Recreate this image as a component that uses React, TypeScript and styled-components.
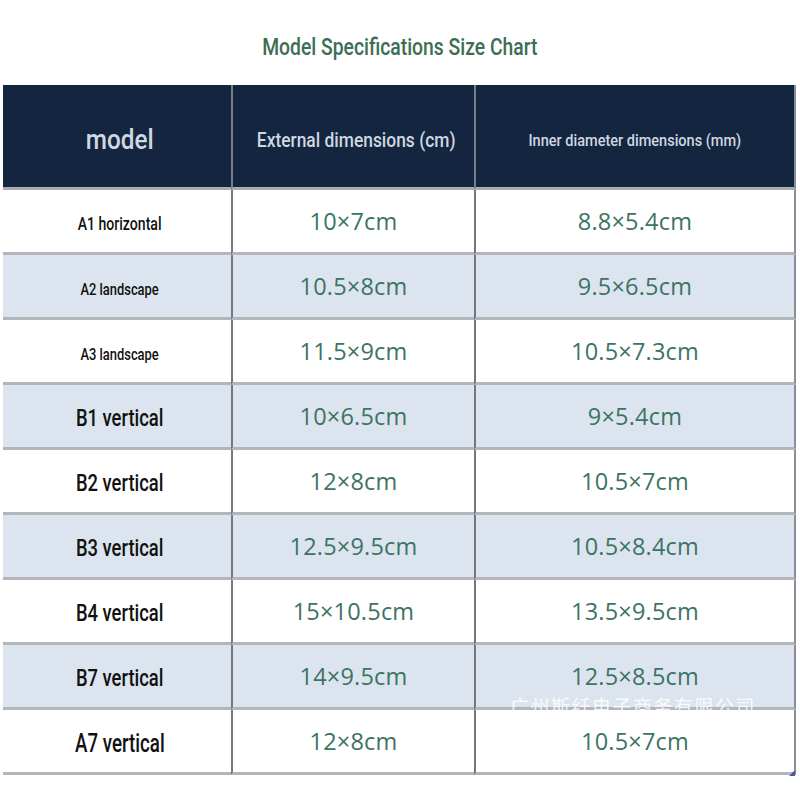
import React from "react";
import styled, { createGlobalStyle } from "styled-components";

const Global = createGlobalStyle`
  html, body { margin: 0; padding: 0; background: #ffffff; }
  body { width: 800px; height: 800px; overflow: hidden; }
`;

const COND = `"Roboto", "Liberation Sans", sans-serif`;

const Page = styled.div`
  position: relative;
  width: 800px;
  height: 800px;
  background: #ffffff;
`;

const Title = styled.h1`
  margin: 0;
  height: 76px;
  padding-top: 9px;
  display: flex;
  align-items: center;
  justify-content: center;
  font-family: ${COND};
  font-weight: 500;
  font-size: 23px;
  color: #3c6e55;
`;

/* condensed text: the reference uses a narrow face, which we approximate */
const Narrow = styled.span<{ $sx: number }>`
  display: inline-block;
  white-space: nowrap;
  transform: scaleX(${(p) => p.$sx});
  transform-origin: center;
`;

const Table = styled.div`
  margin-left: 3px;
  width: 793px;
  display: grid;
  grid-template-columns: 228px 243px 1fr;
`;

const HeadCell = styled.div<{ $size: number; $first?: boolean; $last?: boolean }>`
  height: 94px;
  padding-top: 8px;
  padding-left: ${(p) => (p.$first ? 6 : p.$last ? 0 : 6)}px;
  background: #13253f;
  border-bottom: 3px solid #a9adb2;
  border-left: ${(p) => (p.$first ? "none" : "2px solid #7a7e84")};
  border-right: ${(p) => (p.$last ? "2px solid #8a8e94" : "none")};
  display: flex;
  align-items: center;
  justify-content: center;
  font-family: ${COND};
  font-weight: 500;
  font-size: ${(p) => p.$size}px;
  color: #cfd7e0;
`;

const Cell = styled.div<{ $alt: boolean; $first?: boolean; $last?: boolean }>`
  height: 62px;
  padding-left: ${(p) => (p.$first ? 6 : 0)}px;
  background: ${(p) => (p.$alt ? "#dce5ef" : "#ffffff")};
  border-bottom: 3px solid #b2b5ba;
  border-left: ${(p) => (p.$first ? "none" : "2px solid #74777c")};
  border-right: ${(p) => (p.$last ? "2px solid #8a8e94" : "none")};
  display: flex;
  align-items: center;
  justify-content: center;
`;

const Label = styled.span<{ $size: number }>`
  font-family: ${COND};
  font-weight: 500;
  font-size: ${(p) => p.$size}px;
  color: #111111;
  padding-top: 5px;
`;

const Value = styled.span`
  font-family: "Open Sans", "Liberation Sans", sans-serif;
  font-size: 23.5px;
  color: #3d7363;
  letter-spacing: 0.2px;
`;

const Watermark = styled.div`
  position: absolute;
  left: 510px;
  top: 692px;
  font-family: "Noto Sans CJK SC", sans-serif;
  font-size: 19px;
  letter-spacing: 1.5px;
  color: rgba(255, 255, 255, 0.85);
`;

const Corner = styled.div`
  position: absolute;
  left: 789px;
  top: 770px;
  width: 0;
  height: 0;
  border-left: 6px solid transparent;
  border-bottom: 6px solid #4a5aa8;
`;

const rows: { label: string; size: number; sx: number; ext: string; inner: string }[] = [
  { label: "A1 horizontal", size: 19, sx: 0.74, ext: "10×7cm", inner: "8.8×5.4cm" },
  { label: "A2 landscape", size: 17, sx: 0.76, ext: "10.5×8cm", inner: "9.5×6.5cm" },
  { label: "A3 landscape", size: 17, sx: 0.76, ext: "11.5×9cm", inner: "10.5×7.3cm" },
  { label: "B1 vertical", size: 23, sx: 0.8, ext: "10×6.5cm", inner: "9×5.4cm" },
  { label: "B2 vertical", size: 23, sx: 0.8, ext: "12×8cm", inner: "10.5×7cm" },
  { label: "B3 vertical", size: 23, sx: 0.8, ext: "12.5×9.5cm", inner: "10.5×8.4cm" },
  { label: "B4 vertical", size: 23, sx: 0.8, ext: "15×10.5cm", inner: "13.5×9.5cm" },
  { label: "B7 vertical", size: 23, sx: 0.8, ext: "14×9.5cm", inner: "12.5×8.5cm" },
  { label: "A7 vertical", size: 25, sx: 0.75, ext: "12×8cm", inner: "10.5×7cm" },
];

export default function App() {
  return (
    <Page>
      <Global />
      <Title>
        <Narrow $sx={0.84}>Model Specifications Size Chart</Narrow>
      </Title>
      <Table>
        <HeadCell $size={27} $first>
          <Narrow $sx={0.9}>model</Narrow>
        </HeadCell>
        <HeadCell $size={20}>
          <Narrow $sx={0.87}>External dimensions (cm)</Narrow>
        </HeadCell>
        <HeadCell $size={16.5} $last>
          <Narrow $sx={0.88}>Inner diameter dimensions (mm)</Narrow>
        </HeadCell>
        {rows.map((r, i) => (
          <React.Fragment key={r.label}>
            <Cell $alt={i % 2 === 1} $first>
              <Label $size={r.size}>
                <Narrow $sx={r.sx}>{r.label}</Narrow>
              </Label>
            </Cell>
            <Cell $alt={i % 2 === 1}>
              <Value>{r.ext}</Value>
            </Cell>
            <Cell $alt={i % 2 === 1} $last>
              <Value>{r.inner}</Value>
            </Cell>
          </React.Fragment>
        ))}
      </Table>
      <Watermark>广州斯纤电子商务有限公司</Watermark>
      <Corner />
    </Page>
  );
}
